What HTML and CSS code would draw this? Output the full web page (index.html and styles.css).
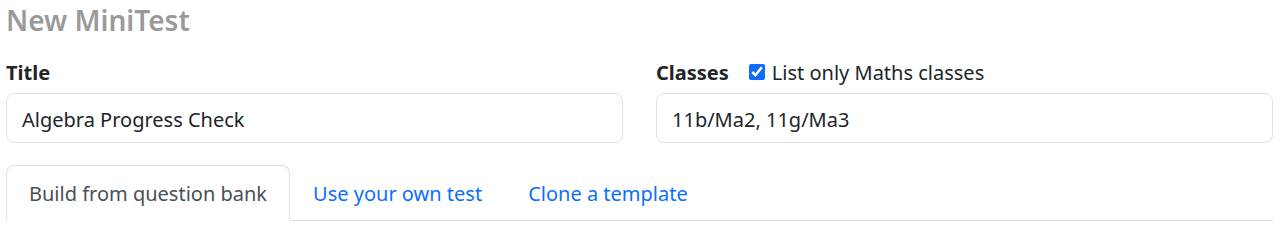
FILE: index.html
```html
<!DOCTYPE html>
<html lang="en">
<head>
    <meta charset="UTF-8">
    <meta name="viewport" content="width=device-width, initial-scale=1.0">
    <title>New MiniTest</title>
    <link rel="stylesheet" href="styles.css">
</head>
<body>

<h1 class="page-title">New MiniTest</h1>

<form class="fields">
    <div class="field">
        <div class="label-row">
            <label for="title">Title</label>
        </div>
        <input type="text" id="title" class="text-input" value="Algebra Progress Check">
    </div>
    <div class="field">
        <div class="label-row">
            <label for="classes">Classes</label>
            <span class="check">
                <input type="checkbox" id="mathsOnly" checked>
                <label for="mathsOnly">List only Maths classes</label>
            </span>
        </div>
        <input type="text" id="classes" class="text-input" value="11b/Ma2, 11g/Ma3">
    </div>
</form>

<ul class="tabs">
    <li><a href="#" class="tab active">Build from question bank</a></li>
    <li><a href="#" class="tab">Use your own test</a></li>
    <li><a href="#" class="tab">Clone a template</a></li>
</ul>

</body>
</html>
```

FILE: styles.css
```css
body {
    margin: 0;
    padding: 0 7px 0 6px;
    font-family: "Noto Sans", "Open Sans", sans-serif;
    font-size: 20px;
    color: #212529;
    background: #fff;
}
.page-title {
    margin: 0;
    padding-top: 2px;
    font-size: 28px;
    font-weight: 600;
    line-height: 36px;
    color: #9a9a9a;
}
.fields {
    display: grid;
    grid-template-columns: 1fr 1fr;
    column-gap: 33px;
    margin-top: 18px;
}
.label-row {
    display: flex;
    align-items: center;
    height: 32px;
    margin-bottom: 5px;
}
.label-row > label {
    font-weight: 700;
}
.check {
    display: flex;
    align-items: center;
    margin-left: 20px;
}
.check input {
    width: 16px;
    height: 16px;
    margin: 0 7px 0 0;
    accent-color: #0d6efd;
}
.text-input {
    box-sizing: border-box;
    width: 100%;
    height: 50px;
    padding: 2px 15px 0;
    border: 1px solid #dee2e6;
    border-radius: 8px;
    font-family: inherit;
    font-size: 20px;
    color: #212529;
}
.tabs {
    display: flex;
    list-style: none;
    margin: 22px 0 0;
    padding: 0;
    border-bottom: 1px solid #dee2e6;
}
.tab {
    display: block;
    padding: 13px 22px 11px;
    border: 1px solid transparent;
    border-radius: 8px 8px 0 0;
    margin-bottom: -1px;
    line-height: 30px;
    color: #0d6efd;
    text-decoration: none;
}
.tab.active {
    color: #495057;
    border-color: #dee2e6 #dee2e6 #fff;
    background: #fff;
}
```
